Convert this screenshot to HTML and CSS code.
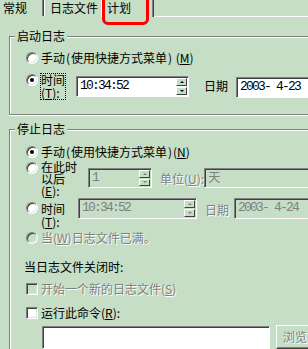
FILE: index.html
```html
<!DOCTYPE html>
<html lang="zh-CN">
<head>
<meta charset="utf-8">
<title>计划</title>
<link rel="stylesheet" href="styles.css">
</head>
<body>
<div class="tabbar">
  <div class="tab tab-general">常规</div>
  <div class="tab tab-logfile">日志文件</div>
  <div class="tab tab-active">计划</div>
  <div class="tab-fill"></div>
  <div class="annot"></div>
</div>
<div class="page">
  <div class="group group-start">
    <div class="group-title">启动日志</div>
    <div class="row row-a1">
      <span class="radio"></span>
      <span class="label">手动<span class="p">(</span>使用快捷方式菜单<span class="p">)</span> (<u>M</u>)</span>
    </div>
    <div class="row row-a2">
      <span class="radio checked r-a2"></span>
      <span class="label stack focus">时间<br>(<u>T</u>):</span>
      <div class="edit time-box">
        <span class="edit-text">10:34:52</span>
        <span class="spinner"><span class="sbtn"><i class="arr up"></i></span><span class="sbtn"><i class="arr down"></i></span></span>
      </div>
      <span class="label date-label">日期</span>
      <div class="edit date-box"><span class="edit-text">2003- 4-23</span></div>
    </div>
  </div>

  <div class="group group-stop">
    <div class="group-title">停止日志</div>
    <div class="row row-b1">
      <span class="radio checked"></span>
      <span class="label">手动<span class="p">(</span>使用快捷方式菜单<span class="p">)</span>(<u>N</u>)</span>
    </div>
    <div class="row row-b2">
      <span class="radio r-b2"></span>
      <span class="label stack3"><span class="ln">在此时</span><span class="ln">以后</span><span class="ln">(<u>E</u>):</span></span>
      <div class="edit disabled num-box">
        <span class="edit-text">1</span>
        <span class="spinner"><span class="sbtn"><i class="arr up"></i></span><span class="sbtn"><i class="arr down"></i></span></span>
      </div>
      <span class="label dim unit-label">单位(<u>U</u>):</span>
      <div class="edit disabled unit-box"><span class="edit-text cjk">天</span></div>
    </div>
    <div class="row row-b3">
      <span class="radio r-b3"></span>
      <span class="label stack2">时间<br>(<u>T</u>):</span>
      <div class="edit disabled time-box2">
        <span class="edit-text">10:34:52</span>
        <span class="spinner"><span class="sbtn"><i class="arr up"></i></span><span class="sbtn"><i class="arr down"></i></span></span>
      </div>
      <span class="label dim date-label2">日期</span>
      <div class="edit disabled date-box2"><span class="edit-text">2003- 4-24</span></div>
    </div>
    <div class="row row-b4">
      <span class="radio off"></span>
      <span class="label dim">当(<u>W</u>)日志文件已满。</span>
    </div>
    <div class="row row-b5">
      <span class="label">当日志文件关闭时:</span>
    </div>
    <div class="row row-b6">
      <span class="check off"></span>
      <span class="label dim">开始一个新的日志文件(<u>S</u>)</span>
    </div>
    <div class="row row-b7">
      <span class="check"></span>
      <span class="label">运行此命令(<u>R</u>):</span>
    </div>
    <div class="row row-b8">
      <div class="edit cmd-box"></div>
      <div class="button"><span class="dim">浏览</span></div>
    </div>
  </div>
</div>
</body>
</html>
```

FILE: styles.css
```css
* { box-sizing: border-box; }
html, body { margin: 0; padding: 0; }
body {
  width: 308px;
  height: 349px;
  overflow: hidden;
  background: #c5dec5;
  font-family: "Noto Sans CJK SC", sans-serif;
  font-size: 12px;
  color: #000;
}
u { text-decoration: underline; text-underline-offset: 1px; }
.p { display: inline-block; width: 6px; text-align: center; }

/* tabs */
.tabbar { position: relative; display: flex; height: 17px; }
.tab { height: 16px; line-height: 15px; white-space: nowrap; }
.tab-general {
  width: 44px; padding-left: 3px;
  border-right: 1px solid #404040;
  box-shadow: inset -1px 0 #808080;
}
.tab-logfile {
  width: 57px; padding-left: 5px;
  border-left: 1px solid #fff;
}
.tab-active {
  width: 53px; height: 17px; padding: 1px 0 0 5px; line-height: 13px;
  border-left: 1px solid #fff;
  border-right: 1px solid #404040;
  box-shadow: inset -1px 0 #808080;
}
.tab-fill { flex: 1; height: 17px; border-bottom: 1px solid #fff; }
.annot {
  position: absolute;
  left: 102px; top: -6px;
  width: 47px; height: 31px;
  border: 3px solid #ff0000;
  border-radius: 6px;
}

/* page & groups */
.page { padding-left: 9px; }
.group {
  width: 310px;
  border: 1px solid #808080;
  border-right: 0;
  box-shadow: inset 1px 1px #fff, 0 1px #fff;
}
.group-start { margin-top: 19px; height: 79px; }
.group-stop { margin-top: 14px; height: 220px; border-bottom: 0; }
.group-title {
  width: max-content;
  height: 14px; line-height: 14px;
  margin: -8px 0 0 5px;
  padding: 0 2px;
  background: #c5dec5;
}

.row { display: flex; align-items: flex-start; padding-left: 16px; }
.label { white-space: nowrap; line-height: 14px; }
.row > .radio + .label, .row > .check + .label { margin-left: 3px; }
.dim { color: #808080; text-shadow: 1px 1px #fff; }

/* radio / check */
.radio {
  flex: none;
  position: relative;
  width: 12px; height: 12px;
  border-radius: 50%;
  background: #fff;
  border: 1px solid;
  border-color: #808080 #fff #fff #808080;
  box-shadow: inset 1px 1px #404040, inset -1px -1px #d8e8d8;
}
.radio.off { background: #c5dec5; }
.radio.checked::after {
  content: "";
  position: absolute;
  left: 3px; top: 3px;
  width: 4px; height: 4px;
  border-radius: 50%;
  background: #000;
}
.check {
  flex: none;
  width: 12px; height: 12px;
  background: #fff;
  border: 1px solid;
  border-color: #808080 #fff #fff #808080;
  box-shadow: inset 1px 1px #404040, inset -1px -1px #d8e8d8;
}
.check.off { background: #c5dec5; }

/* edits */
.edit {
  flex: none;
  display: flex;
  background: #fff;
  border: 1px solid;
  border-color: #808080 #fff #fff #808080;
  box-shadow: inset 1px 1px #404040;
}
.edit.disabled { background: #c5dec5; }
.edit-text {
  flex: 1;
  padding: 0 0 0 3px;
  font-family: "Liberation Mono", monospace;
  font-size: 13px;
  letter-spacing: -1.8px;
  line-height: 18px;
  white-space: nowrap;
}
.edit-text.cjk { font-family: "Noto Sans CJK SC", sans-serif; font-size: 12px; letter-spacing: 0; line-height: 16px; }
.edit.disabled .edit-text { color: #808080; }
.spinner {
  flex: none;
  display: flex; flex-direction: column;
  width: 11px;
  margin: 1px 1px 1px 0;
  gap: 1px;
}
.sbtn {
  flex: 1;
  display: flex; align-items: center; justify-content: center;
  background: #c5dec5;
  border: 1px solid;
  border-color: #fff #404040 #404040 #fff;
}
.arr { display: block; width: 0; height: 0; border-left: 2px solid transparent; border-right: 2px solid transparent; }
.arr.up { border-bottom: 2px solid #000; }
.arr.down { border-top: 2px solid #000; }
.edit.disabled .arr.up { border-bottom-color: #808080; }
.edit.disabled .arr.down { border-top-color: #808080; }

/* group 1 rows */
.row-a1 { margin-top: 8px; height: 14px; align-items: center; }
.row-a2 { margin-top: 8px; }
.r-a2 { margin-top: 1px; }
.focus {
  margin-left: 2px !important;
  width: 28px;
  border: 1px dotted #000;
  line-height: 12.5px;
}
.time-box { margin-left: 10px; margin-top: 3px; width: 113px; height: 21px; }
.date-label { margin-left: 15px; margin-top: 6px; }
.date-box { margin-left: 8px; margin-top: 4px; width: 90px; height: 21px; }

/* group 2 rows */
.row-b1 { margin-top: 9px; height: 14px; align-items: center; }
.row-b2 { margin-top: 2px; }
.r-b2 { margin-top: 1px; }
.stack3 { display: flex; flex-direction: column; width: 36px; }
.stack3 .ln { display: block; height: 12px; line-height: 12px; }
.num-box { margin-left: 11px; margin-top: 7px; width: 64px; height: 20px; }
.unit-label { margin-left: 8px; margin-top: 11px; width: 52px; }
.unit-box { margin-top: 7px; width: 120px; height: 20px; }
.row-b3 { margin-top: 1px; }
.r-b3 { margin-top: 4px; }
.stack2 { line-height: 13px; margin-top: 4px; width: 24px; }
.time-box2 { margin-left: 13px; width: 119px; height: 21px; }
.date-label2 { margin-left: 8px; margin-top: 5px; }
.date-box2 { margin-left: 5px; width: 90px; height: 21px; }
.row-b4 { margin-top: 3px; height: 14px; align-items: center; }
.row-b5 { margin-top: 15px; padding-left: 14px; }
.row-b6 { margin-top: 8px; height: 14px; align-items: center; }
.row-b7 { margin-top: 10px; height: 14px; align-items: center; }
.row-b8 { margin-top: 6px; padding-left: 32px; }
.cmd-box { width: 228px; height: 23px; }
.button {
  flex: none;
  margin-left: 6px; margin-top: -1px;
  width: 44px; height: 24px;
  padding-left: 6px;
  line-height: 21px;
  white-space: nowrap;
  border: 1px solid;
  border-right: 0;
  border-color: #fff #404040 #404040 #fff;
  box-shadow: inset 0 -1px #808080;
}
```
